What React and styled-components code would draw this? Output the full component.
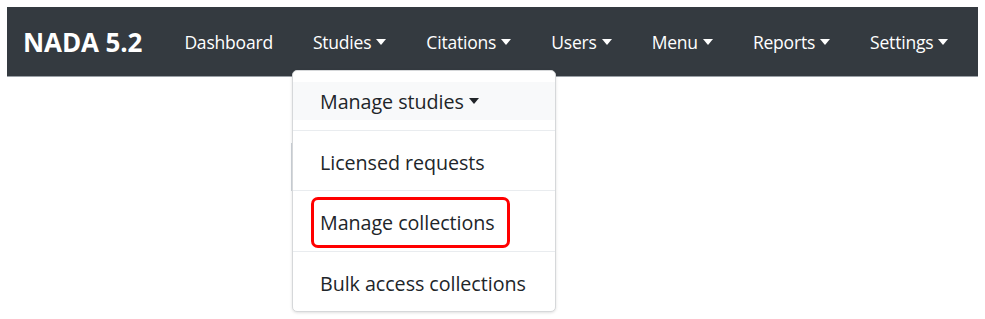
import React from 'react'
import styled, { createGlobalStyle } from 'styled-components'

const Global = createGlobalStyle`
  html, body {
    margin: 0;
    background: #fff;
  }
  body {
    font-family: "Open Sans", "Liberation Sans", sans-serif;
  }
`;

const Page = styled.div`
  position: relative;
  width: 985px;
  height: 319px;
  padding: 7px;
  box-sizing: border-box;
  overflow: hidden;
`;

const Navbar = styled.nav`
  position: relative;
  display: flex;
  align-items: center;
  width: 971px;
  height: 70px;
  background: #343a40;
  border-bottom: 1px solid #9aa0a6;
  box-sizing: border-box;
  padding-left: 16px;
`;

const Brand = styled.div`
  color: #fff;
  font-weight: 700;
  font-size: 26px;
  margin-right: 22px;
  letter-spacing: -0.1px;
`;

const NavList = styled.ul`
  display: flex;
  list-style: none;
  margin: 0;
  padding: 0;
`;

const NavItem = styled.li`
  position: relative;
  padding: 0 20px;
  color: #fff;
  font-size: 17.5px;
  letter-spacing: -0.2px;
  display: flex;
  align-items: center;
`;

const Caret = styled.span`
  display: inline-block;
  margin-left: 5px;
  border-top: 6px solid currentColor;
  border-left: 5.5px solid transparent;
  border-right: 5.5px solid transparent;
`;

const Behind = styled.div`
  position: absolute;
  width: 1px;
  background: ${p => p.$color};
`;

const Dropdown = styled.div`
  position: absolute;
  left: 292px;
  top: 70px;
  width: 264px;
  height: 242px;
  background: #fff;
  border: 1px solid #d6d8da;
  border-radius: 5px;
  box-shadow: 0 1px 3px rgba(0, 0, 0, 0.12);
  box-sizing: border-box;
  padding-top: 11px;
  color: #212529;
  font-size: 19.7px;
  letter-spacing: -0.05px;
`;

const HeadItem = styled.div`
  display: flex;
  align-items: center;
  height: 38px;
  padding-left: 27px;
  background: #f8f9fa;
  margin-bottom: 10px;
`;

const Item = styled.div`
  display: flex;
  align-items: center;
  height: ${p => (p.$last ? 61 : 60)}px;
  border-top: 1px solid #e9ecef;
  box-sizing: border-box;
  padding: 3px 0 0 27px;
`;

const Highlight = styled.span`
  position: relative;
  &::after {
    content: '';
    position: absolute;
    left: -9px;
    right: -15px;
    top: -12px;
    bottom: -12px;
    border: 3px solid #f00;
    border-radius: 7px;
  }
`;

const navItems = ['Studies', 'Citations', 'Users', 'Menu', 'Reports', 'Settings'];

export default function App() {
  return (
    <Page>
      <Global />
      <Navbar>
        <Brand>NADA 5.2</Brand>
        <NavList>
          <NavItem>Dashboard</NavItem>
          {navItems.map(n => (
            <NavItem key={n}>{n}<Caret /></NavItem>
          ))}
        </NavList>
      </Navbar>
      <Behind $color="#ced4da" style={{ left: 291, top: 143, height: 48 }} />
      <Behind $color="#1d1f4a" style={{ left: 555, top: 228, height: 15 }} />
      <Dropdown>
        <HeadItem>Manage studies<Caret /></HeadItem>
        <Item>Licensed requests</Item>
        <Item $last><Highlight>Manage collections</Highlight></Item>
        <Item>Bulk access collections</Item>
      </Dropdown>
    </Page>
  )
}
